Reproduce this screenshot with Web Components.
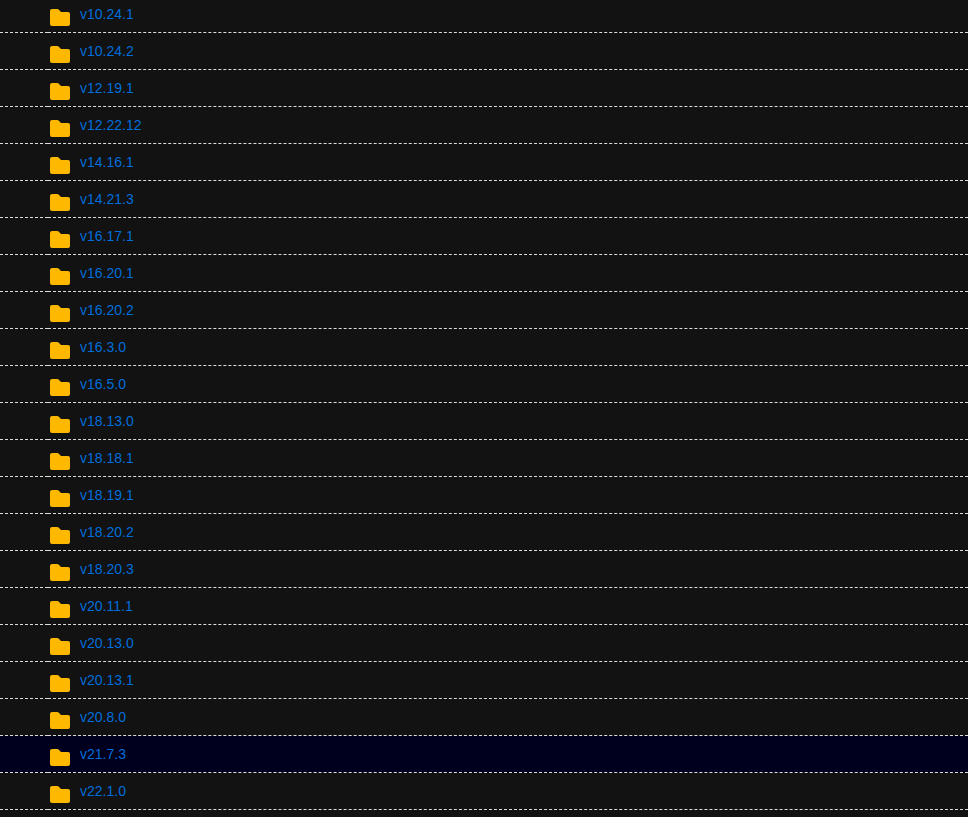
<!DOCTYPE html>
<html lang="en">
<head>
<meta charset="utf-8">
<title>Versions</title>
<style>
body {
	background: #121212;
	color: #ddd;
	font: 14px/20px "Liberation Sans", Arial, sans-serif;
	margin: 0;
}
</style>
</head>
<body>
<folder-listing></folder-listing>

<script>
const versions = [
	'v10.24.1', 'v10.24.2', 'v12.19.1', 'v12.22.12', 'v14.16.1', 'v14.21.3',
	'v16.17.1', 'v16.20.1', 'v16.20.2', 'v16.3.0', 'v16.5.0', 'v18.13.0',
	'v18.18.1', 'v18.19.1', 'v18.20.2', 'v18.20.3', 'v20.11.1', 'v20.13.0',
	'v20.13.1', 'v20.8.0', 'v21.7.3', 'v22.1.0'
];
const current = 'v21.7.3';

class FolderIcon extends HTMLElement {
	constructor() {
		super();
		this.attachShadow({mode: 'open'});
		this.shadowRoot.innerHTML = `<style>
:host {
	display: block;
	height: 17px;
	width: 20px;
}

svg {
	display: block;
	fill: #ffb800;
}
</style>
<svg width="20" height="17" viewBox="0 0 20 17" aria-hidden="true">
	<path d="M2 0h5.2c.6 0 1 .2 1.4.6L11 3h7a2 2 0 0 1 2 2v10a2 2 0 0 1-2 2H2a2 2 0 0 1-2-2V2a2 2 0 0 1 2-2z"/>
</svg>`;
	}
}

class FolderLink extends HTMLElement {
	constructor() {
		super();
		this.attachShadow({mode: 'open'});
		this.shadowRoot.innerHTML = `<style>
:host {
	display: block;
}

a {
	color: #006edb;
	text-decoration: none;
}

a:hover {
	text-decoration: underline;
}
</style>
<a><slot></slot></a>`;
	}

	connectedCallback() {
		this.shadowRoot.querySelector('a').href = this.getAttribute('href');
	}
}

class FolderListing extends HTMLElement {
	constructor() {
		super();
		this.attachShadow({mode: 'open'});
		this.shadowRoot.innerHTML = `<style>
:host {
	display: block;
	overflow: hidden;
}

/* The list sits slightly scrolled under the top edge */
table {
	border-collapse: separate;
	border-spacing: 0;
	margin-top: -4px;
	width: 100%;
}

td {
	border-bottom: 1px dashed #ddd;
	box-sizing: border-box;
	height: 37px;
	padding: 0;
	vertical-align: top;
}

.gutter {
	width: 48px;
}

.entry {
	display: flex;
	gap: 10px;
	padding: 8px 2px 0;
}

folder-icon {
	margin-top: 5px;
}

.current {
	background: #00001e;
}
</style>
<table>
	<tbody></tbody>
</table>`;
	}

	connectedCallback() {
		this.shadowRoot.querySelector('tbody').innerHTML = versions.map((name) => `<tr${name === current ? ' class="current"' : ''}>
	<td class="gutter"></td>
	<td>
		<div class="entry">
			<folder-icon></folder-icon>
			<folder-link href="#${name}">${name}</folder-link>
		</div>
	</td>
</tr>`).join('');
	}
}

customElements.define('folder-icon', FolderIcon);
customElements.define('folder-link', FolderLink);
customElements.define('folder-listing', FolderListing);
</script>
</body>
</html>
